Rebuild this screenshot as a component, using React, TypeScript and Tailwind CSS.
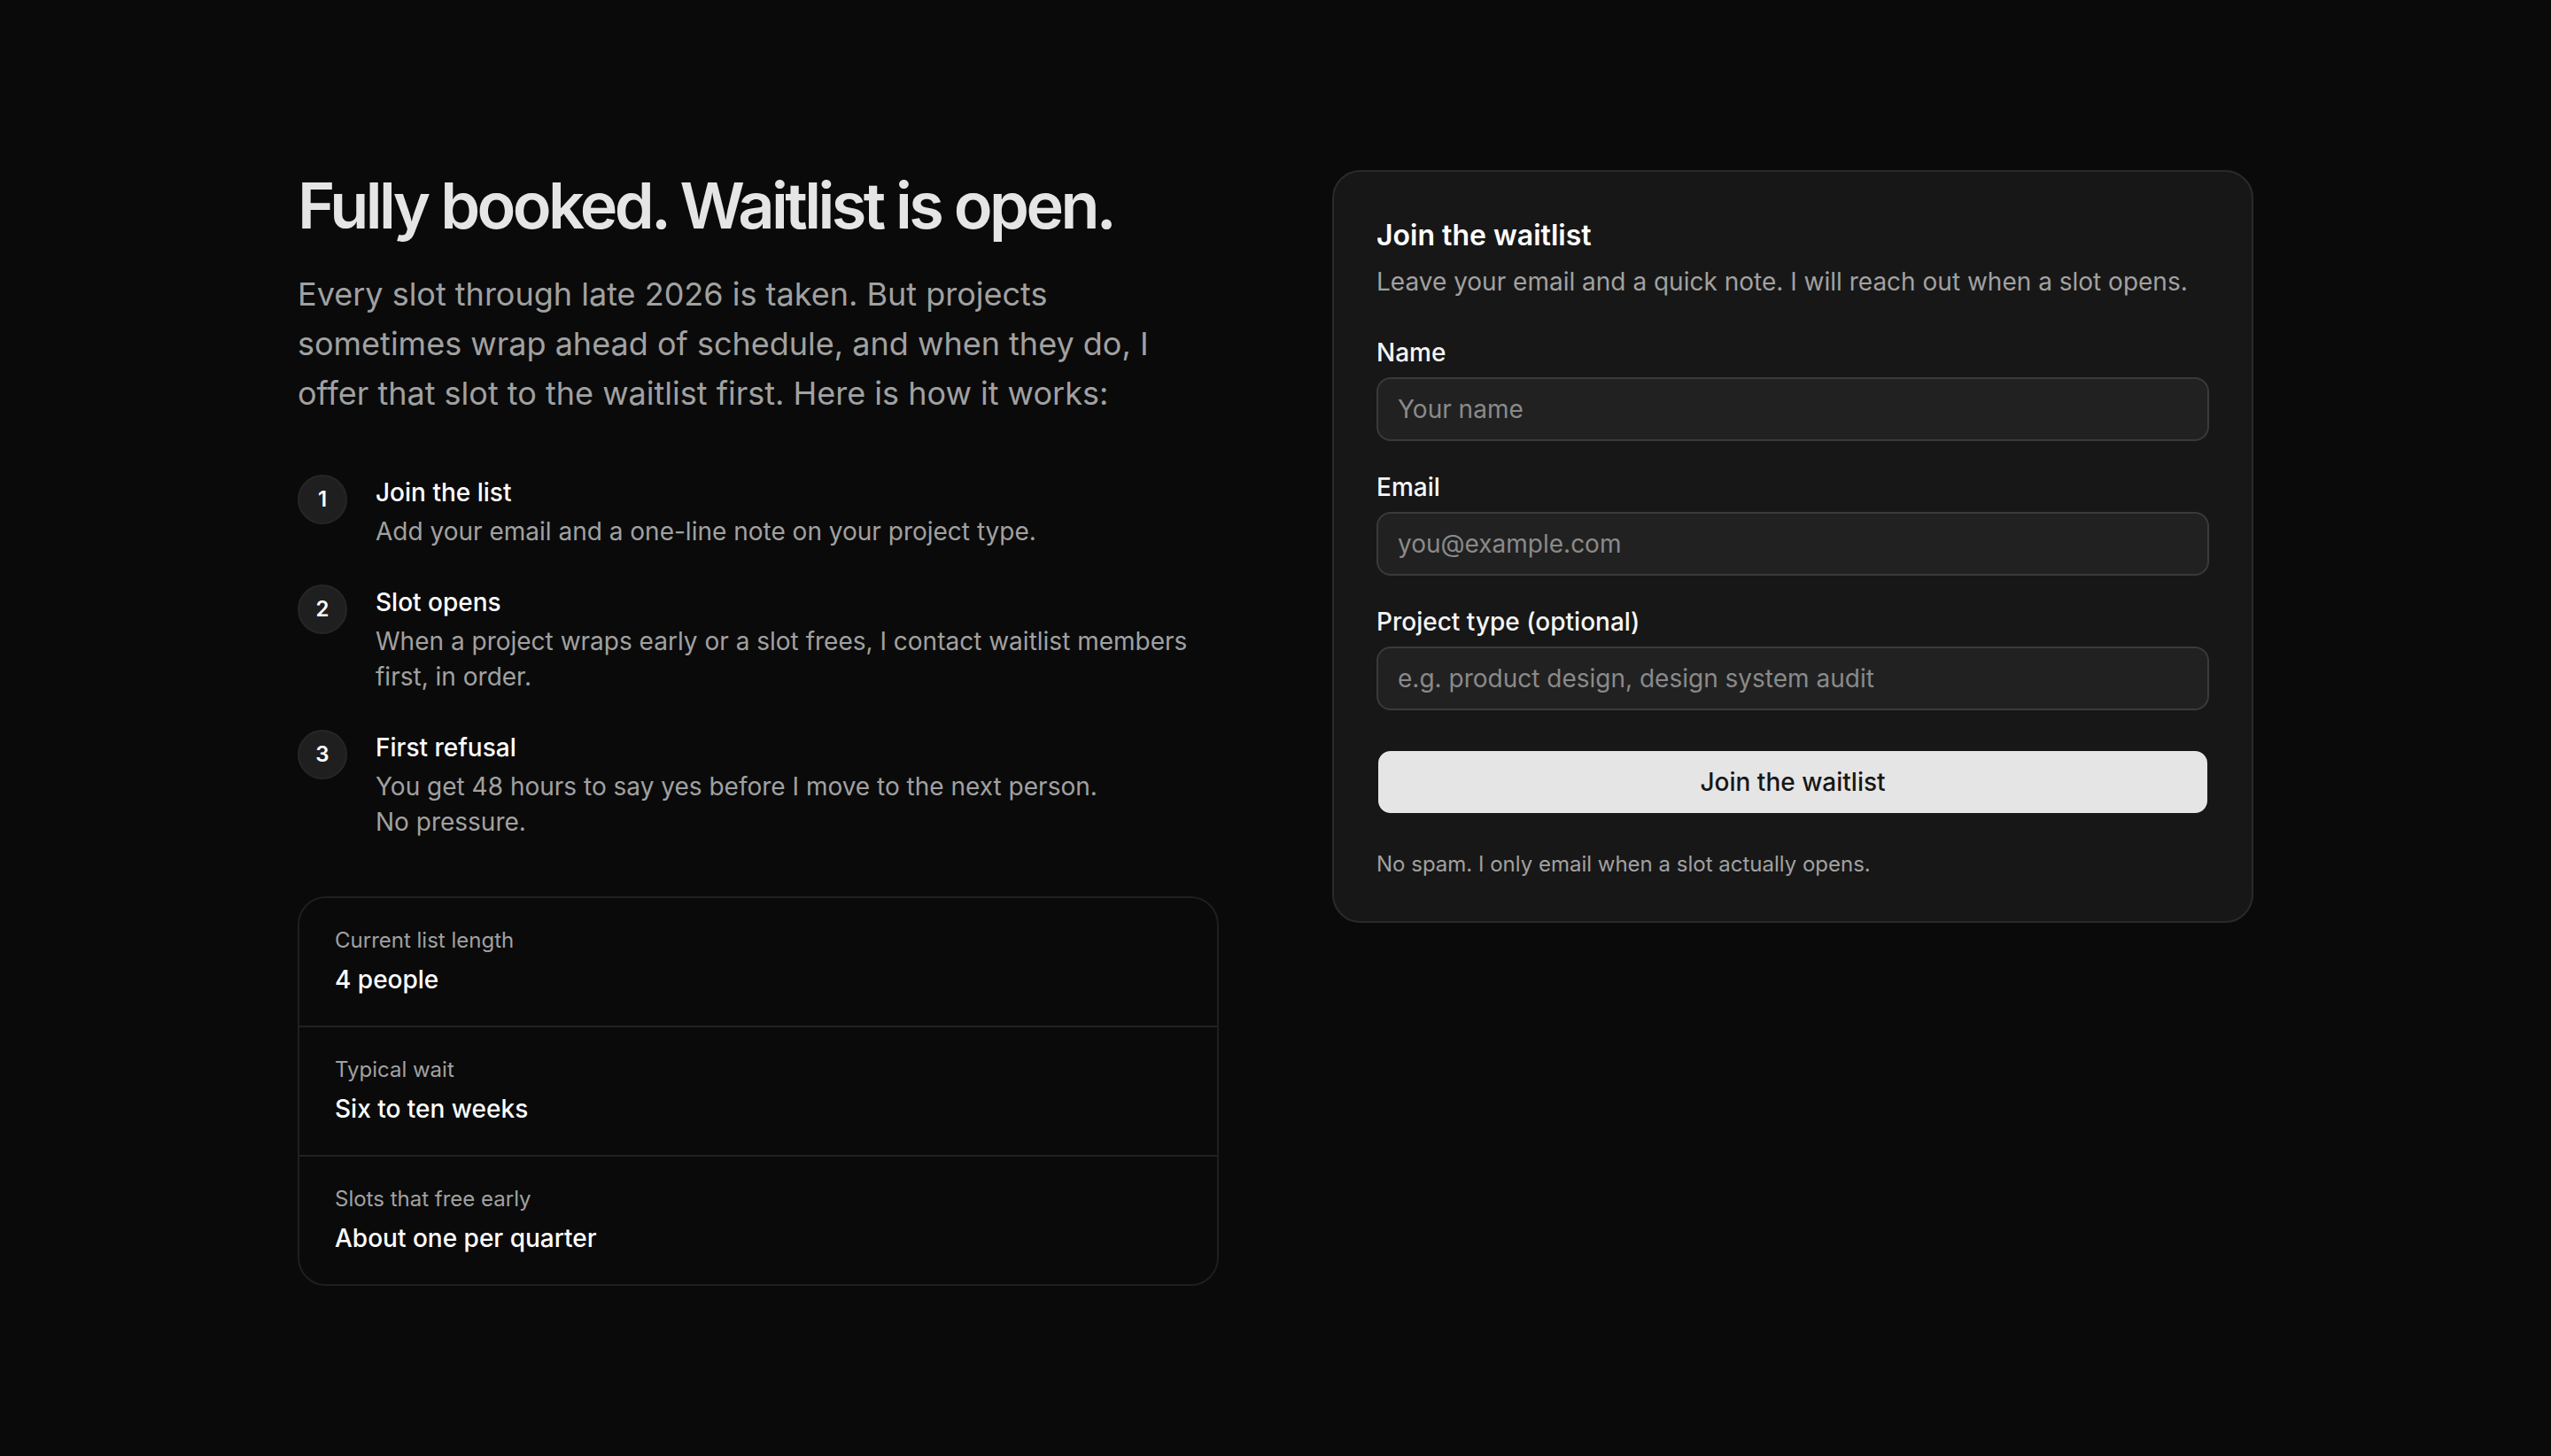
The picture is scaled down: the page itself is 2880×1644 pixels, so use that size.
import React from 'react';

const steps = [
  { n: 1, title: 'Join the list', body: <>Add your email and a one-line note on your project type.</> },
  { n: 2, title: 'Slot opens', body: <>When a project wraps early or a slot frees, I contact waitlist members first, in order.</> },
  { n: 3, title: 'First refusal', body: <>You get 48 hours to say yes before I move to the next person.<br />No pressure.</> },
];

const stats = [
  { label: 'Current list length', value: '4 people' },
  { label: 'Typical wait', value: 'Six to ten weeks' },
  { label: 'Slots that free early', value: 'About one per quarter' },
];

const Field = ({ label, placeholder, type = 'text' }: { label: string; placeholder: string; type?: string }) => (
  <div>
    <label className="block text-[28px] leading-10 font-medium text-neutral-100">{label}</label>
    <input
      type={type}
      placeholder={placeholder}
      className="mt-2 h-18 w-full rounded-2xl border-2 border-[#3a3a3a] bg-[#212121] px-[22px] text-[28px] text-neutral-100 placeholder:text-[#8a8a8a] outline-none"
    />
  </div>
);

export default function App() {
  return (
    <div className="min-h-screen bg-[#0a0a0a] font-['Inter',sans-serif] text-neutral-100 antialiased">
      <div className="mx-auto grid max-w-[2304px] grid-cols-2 gap-32 px-12 py-48">
        {/* Left */}
        <div>
          <h1 className="text-7xl leading-20 font-semibold tracking-tighter text-neutral-200">Fully booked. Waitlist is open.</h1>
          <p className="mt-8 text-4xl leading-14 text-neutral-400">
            Every slot through late 2026 is taken. But projects sometimes wrap ahead of schedule, and when they do, I offer that slot to the waitlist first. Here is how it works:
          </p>

          <ol className="mt-16 space-y-10">
            {steps.map((s) => (
              <li key={s.n} className="flex items-start gap-8">
                <span className="flex h-14 w-14 shrink-0 items-center justify-center rounded-full border-2 border-[#262626] bg-[#1f1f1f] text-2xl font-semibold text-white">
                  {s.n}
                </span>
                <div>
                  <p className="text-[28px] leading-10 font-medium text-white">{s.title}</p>
                  <p className="mt-1 text-[28px] leading-10 text-neutral-400">{s.body}</p>
                </div>
              </li>
            ))}
          </ol>

          <div className="mt-16 divide-y-2 divide-[#222] rounded-4xl border-2 border-[#1f1f1f]">
            {stats.map((s) => (
              <div key={s.label} className="px-10 py-8">
                <p className="text-2xl text-neutral-400">{s.label}</p>
                <p className="mt-2 text-[28px] leading-10 font-medium text-white">{s.value}</p>
              </div>
            ))}
          </div>
        </div>

        {/* Right */}
        <div className="self-start rounded-4xl border-2 border-[#2a2a2a] bg-[#171717] p-12">
          <h2 className="text-[32px] leading-12 font-semibold text-white">Join the waitlist</h2>
          <p className="mt-2 text-[28px] leading-10 text-neutral-400">Leave your email and a quick note. I will reach out when a slot opens.</p>

          <form className="mt-10 space-y-8" onSubmit={(e) => e.preventDefault()}>
            <Field label="Name" placeholder="Your name" />
            <Field label="Email" placeholder="you@example.com" type="email" />
            <Field label="Project type (optional)" placeholder="e.g. product design, design system audit" />
            <button type="submit" className="mt-3 h-[74px] w-full rounded-2xl border-2 border-[#171717] bg-[#e5e5e5] text-[28px] font-medium text-[#171717]">
              Join the waitlist
            </button>
          </form>

          <p className="mt-10 text-2xl text-neutral-400">No spam. I only email when a slot actually opens.</p>
        </div>
      </div>
    </div>
  );
}
